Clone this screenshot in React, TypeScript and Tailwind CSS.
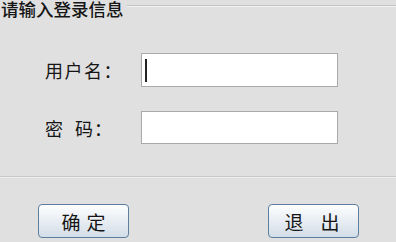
export default function App() {
  const font = { fontFamily: '"Noto Sans CJK SC", "Noto Sans", sans-serif' };
  return (
    <div
      className="w-[396px] h-[242px] overflow-hidden bg-[#e0e0e0] text-[#151515] flex flex-col"
      style={font}
    >
      {/* titled border */}
      <div className="flex items-start h-[20px] -mt-[2px]">
        <span className="text-[17.5px] leading-[22px] font-medium pl-[1px] pr-[3px] whitespace-nowrap">请输入登录信息</span>
        <div className="flex-1 mt-[7px] border-t border-[#c4c4c4] border-b border-b-[#f2f2f2]" />
      </div>

      <div className="flex flex-col gap-[24px] mt-[35px]">
        <div className="flex items-center">
          <label className="w-[141px] pl-[45px] text-[18px] leading-none tracking-[1.5px] whitespace-nowrap">用户名：</label>
          <div className="w-[197px] h-[34px] bg-white border border-[#aaaaaa] flex items-center pl-[3px]">
            <span className="w-[2px] h-[23px] bg-[#222]" />
          </div>
        </div>
        <div className="flex items-center">
          <label className="w-[141px] pl-[45px] text-[18px] leading-none whitespace-nowrap flex">
            <span>密</span>
            <span className="ml-[12px]">码</span>
            <span className="ml-[1px]">：</span>
          </label>
          <div className="w-[197px] h-[33px] bg-white border border-[#aaaaaa]" />
        </div>
      </div>

      <div className="mt-[32px] border-t border-[#c8c8c8] border-b border-b-[#eeeeee]" />

      <div className="flex mt-[26px] pl-[38px] gap-[139px]">
        <button className="w-[91px] h-[34px] rounded-[4px] border border-[#5d7f9f] bg-gradient-to-b from-[#fdfeff] to-[#d3dde7] text-[19px] leading-none flex items-center justify-center gap-[6px]">
          <span>确</span>
          <span>定</span>
        </button>
        <button className="w-[91px] h-[34px] rounded-[4px] border border-[#5d7f9f] bg-gradient-to-b from-[#fdfeff] to-[#d3dde7] text-[19px] leading-none flex items-center justify-center gap-[17px] pr-[3px]">
          <span>退</span>
          <span>出</span>
        </button>
      </div>
    </div>
  );
}
